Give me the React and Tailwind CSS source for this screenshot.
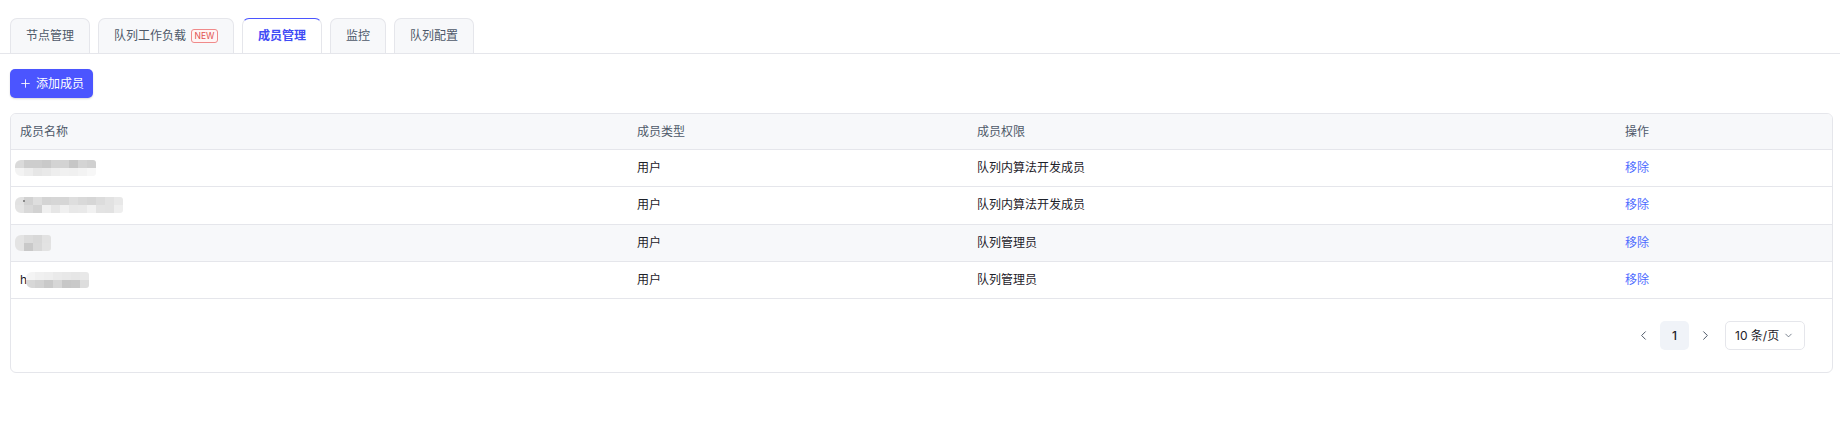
import React, { useState } from 'react';
import { Plus, ChevronLeft, ChevronRight, ChevronDown } from 'lucide-react';

const tabs = [
  { key: 'nodes', label: '节点管理' },
  { key: 'workload', label: '队列工作负载', badge: 'NEW' },
  { key: 'members', label: '成员管理' },
  { key: 'monitor', label: '监控' },
  { key: 'config', label: '队列配置' },
];

// masked user names, drawn as mosaic cells (top row / bottom row shades)
const members = [
  {
    mask: {
      top: ['#dadada', '#cdcdcd', '#cdcdcd', '#c9c9c9', '#d3d3d3', '#d3d3d3', '#c6c6c6', '#d4d4d4', '#d0d0d0'],
      bottom: ['#f3f3f3', '#ededed', '#e6e6e6', '#e9e9e9', '#eeeeee', '#f1f1f1', '#f0f0f0', '#f3f3f3', '#f7f7f7'],
    },
    type: '用户',
    role: '队列内算法开发成员',
  },
  {
    mask: {
      top: ['#e2e2e2', '#d2d2d2', '#dedede', '#d4d4d4', '#d6d6d6', '#d6d6d6', '#dedede', '#d9d9d9', '#d6d6d6', '#dcdcdc', '#e2e2e2', '#e8e8e8'],
      bottom: ['#e4e4e4', '#d9d9d9', '#d2d2d2', '#f0f0f0', '#e6e6e6', '#f0f0f0', '#e8e8e8', '#e9e9e9', '#f1f1f1', '#e3e3e3', '#e2e2e2', '#eeeeee'],
    },
    lead: '.',
    type: '用户',
    role: '队列内算法开发成员',
  },
  {
    mask: {
      top: ['#e4e4e4', '#dcdcdc', '#d8d8d8', '#e2e2e2'],
      bottom: ['#e4e4e4', '#c9c9c9', '#d9d9d9', '#e3e3e3'],
    },
    type: '用户',
    role: '队列管理员',
    shaded: true,
  },
  {
    mask: {
      top: ['#f4f4f4', '#f0f0f0', '#eeeeee', '#eaeaea', '#e8e8e8', '#e6e6e6', '#e8e8e8'],
      bottom: ['#d7d7d7', '#d2d2d2', '#c9c9c9', '#d6d6d6', '#c7c7c7', '#c9c9c9', '#dddddd'],
    },
    lead: 'h',
    type: '用户',
    role: '队列管理员',
  },
];

function MaskedName({ mask, lead }) {
  return (
    <div className="flex items-center">
      {lead === 'h' && <span className="text-[12px] text-[#1d2129] leading-none mr-[-1px]">h</span>}
      <div className={`relative flex flex-col overflow-hidden rounded-l-[6px] rounded-r-[3px] blur-[0.4px] ${lead === 'h' ? '' : '-ml-[5px]'}`}>
        <div className="flex">
          {mask.top.map((c, i) => (
            <div key={i} className="w-[9px] h-[8px]" style={{ backgroundColor: c }} />
          ))}
        </div>
        <div className="flex">
          {mask.bottom.map((c, i) => (
            <div key={i} className="w-[9px] h-[8px]" style={{ backgroundColor: c }} />
          ))}
        </div>
        {lead === '.' && <span className="absolute left-[8px] top-[3px] w-[2px] h-[2px] bg-[#8a8a8a]" />}
      </div>
    </div>
  );
}

export default function App() {
  const [active, setActive] = useState('members');

  return (
    <div className="w-[1840px] h-[444px] bg-white font-['Inter','Noto_Sans_CJK_SC',sans-serif] text-[#1d2129]">
      {/* tab strip */}
      <div className="pt-[18px] border-b border-[#e5e6eb] pl-[10px] flex gap-[8px]">
        {tabs.map((t) => {
          const on = t.key === active;
          return (
            <button
              key={t.key}
              onClick={() => setActive(t.key)}
              className={
                on
                  ? 'h-[35px] px-[15px] -mb-px flex items-center gap-[5px] rounded-t-[7px] border border-b-0 border-[#e5e6eb] border-t-[#4b55ff] bg-white text-[12px] font-semibold text-[#3f4cf5]'
                  : 'h-[35px] px-[15px] flex items-center gap-[5px] rounded-t-[7px] border border-b-0 border-[#e5e6eb] bg-[#f7f8fa] text-[12px] text-[#4e5969]'
              }
            >
              {t.label}
              {t.badge && (
                <span className="w-[27px] h-[14px] flex items-center justify-center rounded-[3px] border border-[#f08a8a] bg-[#fff5f5] text-[8.5px] leading-none text-[#e05050]">
                  {t.badge}
                </span>
              )}
            </button>
          );
        })}
      </div>

      <div className="pl-[10px] pr-[7px]">
        <button className="mt-[15px] h-[29px] pl-[9px] pr-[9px] flex items-center gap-[4px] rounded-[5px] bg-[#4b55ff] text-white text-[12px] shadow-[0_1px_2px_rgba(0,0,0,0.15)]">
          <Plus className="w-[13px] h-[13px]" strokeWidth={1.6} />
          添加成员
        </button>

        {/* member table */}
        <div className="mt-[15px] border border-[#e5e6eb] rounded-[6px] overflow-hidden text-[12px]">
          <div className="grid grid-cols-[616px_340px_648px_1fr] h-[36px] items-center bg-[#f7f8fa] border-b border-[#e5e6eb] text-[#4e5969]">
            <div className="pl-[9px]">成员名称</div>
            <div className="pl-[10px]">成员类型</div>
            <div className="pl-[10px]">成员权限</div>
            <div className="pl-[10px]">操作</div>
          </div>
          {members.map((m, i) => (
            <div
              key={i}
              className={`grid grid-cols-[616px_340px_648px_1fr] h-[37.25px] items-center border-b border-[#e5e6eb] ${m.shaded ? 'bg-[#f7f8fa]' : 'bg-white'}`}
            >
              <div className="pl-[9px]">
                <MaskedName mask={m.mask} lead={m.lead} />
              </div>
              <div className="pl-[10px]">{m.type}</div>
              <div className="pl-[10px]">{m.role}</div>
              <div className="pl-[10px]">
                <button className="text-[#4e6bff]">移除</button>
              </div>
            </div>
          ))}

          {/* pagination */}
          <div className="h-[73px] flex items-center justify-end pr-[27px]">
            <button className="w-[16px] flex justify-center text-[#4e5969]">
              <ChevronLeft className="w-[15px] h-[15px]" strokeWidth={1.6} />
            </button>
            <div className="ml-[9px] w-[29px] h-[29px] rounded-[5px] bg-[#f0f3f8] flex items-center justify-center text-[12px] font-medium text-[#1d2129]">
              1
            </div>
            <button className="ml-[8px] w-[16px] flex justify-center text-[#4e5969]">
              <ChevronRight className="w-[15px] h-[15px]" strokeWidth={1.6} />
            </button>
            <div className="ml-[12px] w-[80px] h-[29px] rounded-[5px] border border-[#e5e6eb] flex items-center pl-[9px] gap-[4px] text-[12px] text-[#1d2129]">
              10 条/页
              <ChevronDown className="w-[11px] h-[11px] text-[#4e5969]" strokeWidth={1.6} />
            </div>
          </div>
        </div>
      </div>
    </div>
  );
}
